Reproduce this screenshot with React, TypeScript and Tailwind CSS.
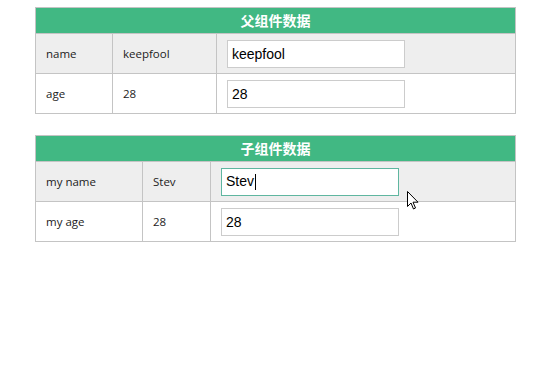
import React from 'react';

type Row = { label: string; value: string; focused?: boolean };

const cellFont = "font-['Open_Sans','DejaVu_Sans',sans-serif]";

function DataTable({ title, rows, widths }: { title: string; rows: Row[]; widths: [number, number, number] }) {
  return (
    <table className="w-[480px] border-collapse border border-[#c4c4c4] table-fixed">
      <colgroup>
        <col style={{ width: widths[0] }} />
        <col style={{ width: widths[1] }} />
        <col style={{ width: widths[2] }} />
      </colgroup>
      <thead>
        <tr>
          <th
            colSpan={3}
            className="h-[25px] bg-[#41b883] p-0 text-center text-[14px] font-bold text-white font-['Noto_Sans_CJK_SC',sans-serif] leading-[25px]"
          >
            {title}
          </th>
        </tr>
      </thead>
      <tbody>
        {rows.map((r, i) => (
          <tr key={r.label} className={i === 0 ? 'bg-[#eeeeee]' : 'bg-white'}>
            <td className={`h-[40px] border border-[#c4c4c4] px-[10px] text-[11.5px] text-[#222] ${cellFont}`}>{r.label}</td>
            <td className={`h-[40px] border border-[#c4c4c4] px-[10px] text-[11.5px] text-[#222] ${cellFont}`}>{r.value}</td>
            <td className="h-[40px] border border-[#c4c4c4] px-[10px]">
              {r.focused ? (
                <div className="flex h-[28px] w-[178px] items-center border border-[#5fb6a0] bg-white pl-[4px] text-[14px] text-black font-['Liberation_Sans',Arial,sans-serif]">
                  <span>{r.value}</span>
                  <span className="ml-px h-[16px] w-px bg-black" />
                </div>
              ) : (
                <input
                  readOnly
                  value={r.value}
                  className="block h-[28px] w-[178px] border border-[#cccccc] bg-white pl-[4px] text-[14px] text-black outline-none font-['Liberation_Sans',Arial,sans-serif]"
                />
              )}
            </td>
          </tr>
        ))}
      </tbody>
    </table>
  );
}

export default function App() {
  return (
    <div className="relative h-[373px] w-[557px] bg-white">
      <div className="flex flex-col gap-[21px] pl-[35px] pt-[7px]">
        <DataTable
          title="父组件数据"
          widths={[77, 104, 299]}
          rows={[
            { label: 'name', value: 'keepfool' },
            { label: 'age', value: '28' },
          ]}
        />
        <DataTable
          title="子组件数据"
          widths={[107, 68, 305]}
          rows={[
            { label: 'my name', value: 'Stev', focused: true },
            { label: 'my age', value: '28' },
          ]}
        />
      </div>
      {/* mouse pointer */}
      <svg className="absolute left-[407px] top-[191px]" width="12" height="19" viewBox="0 0 12 19">
        <path d="M0.5 0.5 L0.5 15.5 L4 12 L6.5 18 L8.5 17 L6 11.2 L11 11.2 Z" fill="white" stroke="black" strokeWidth="1" strokeLinejoin="round" />
      </svg>
    </div>
  );
}
